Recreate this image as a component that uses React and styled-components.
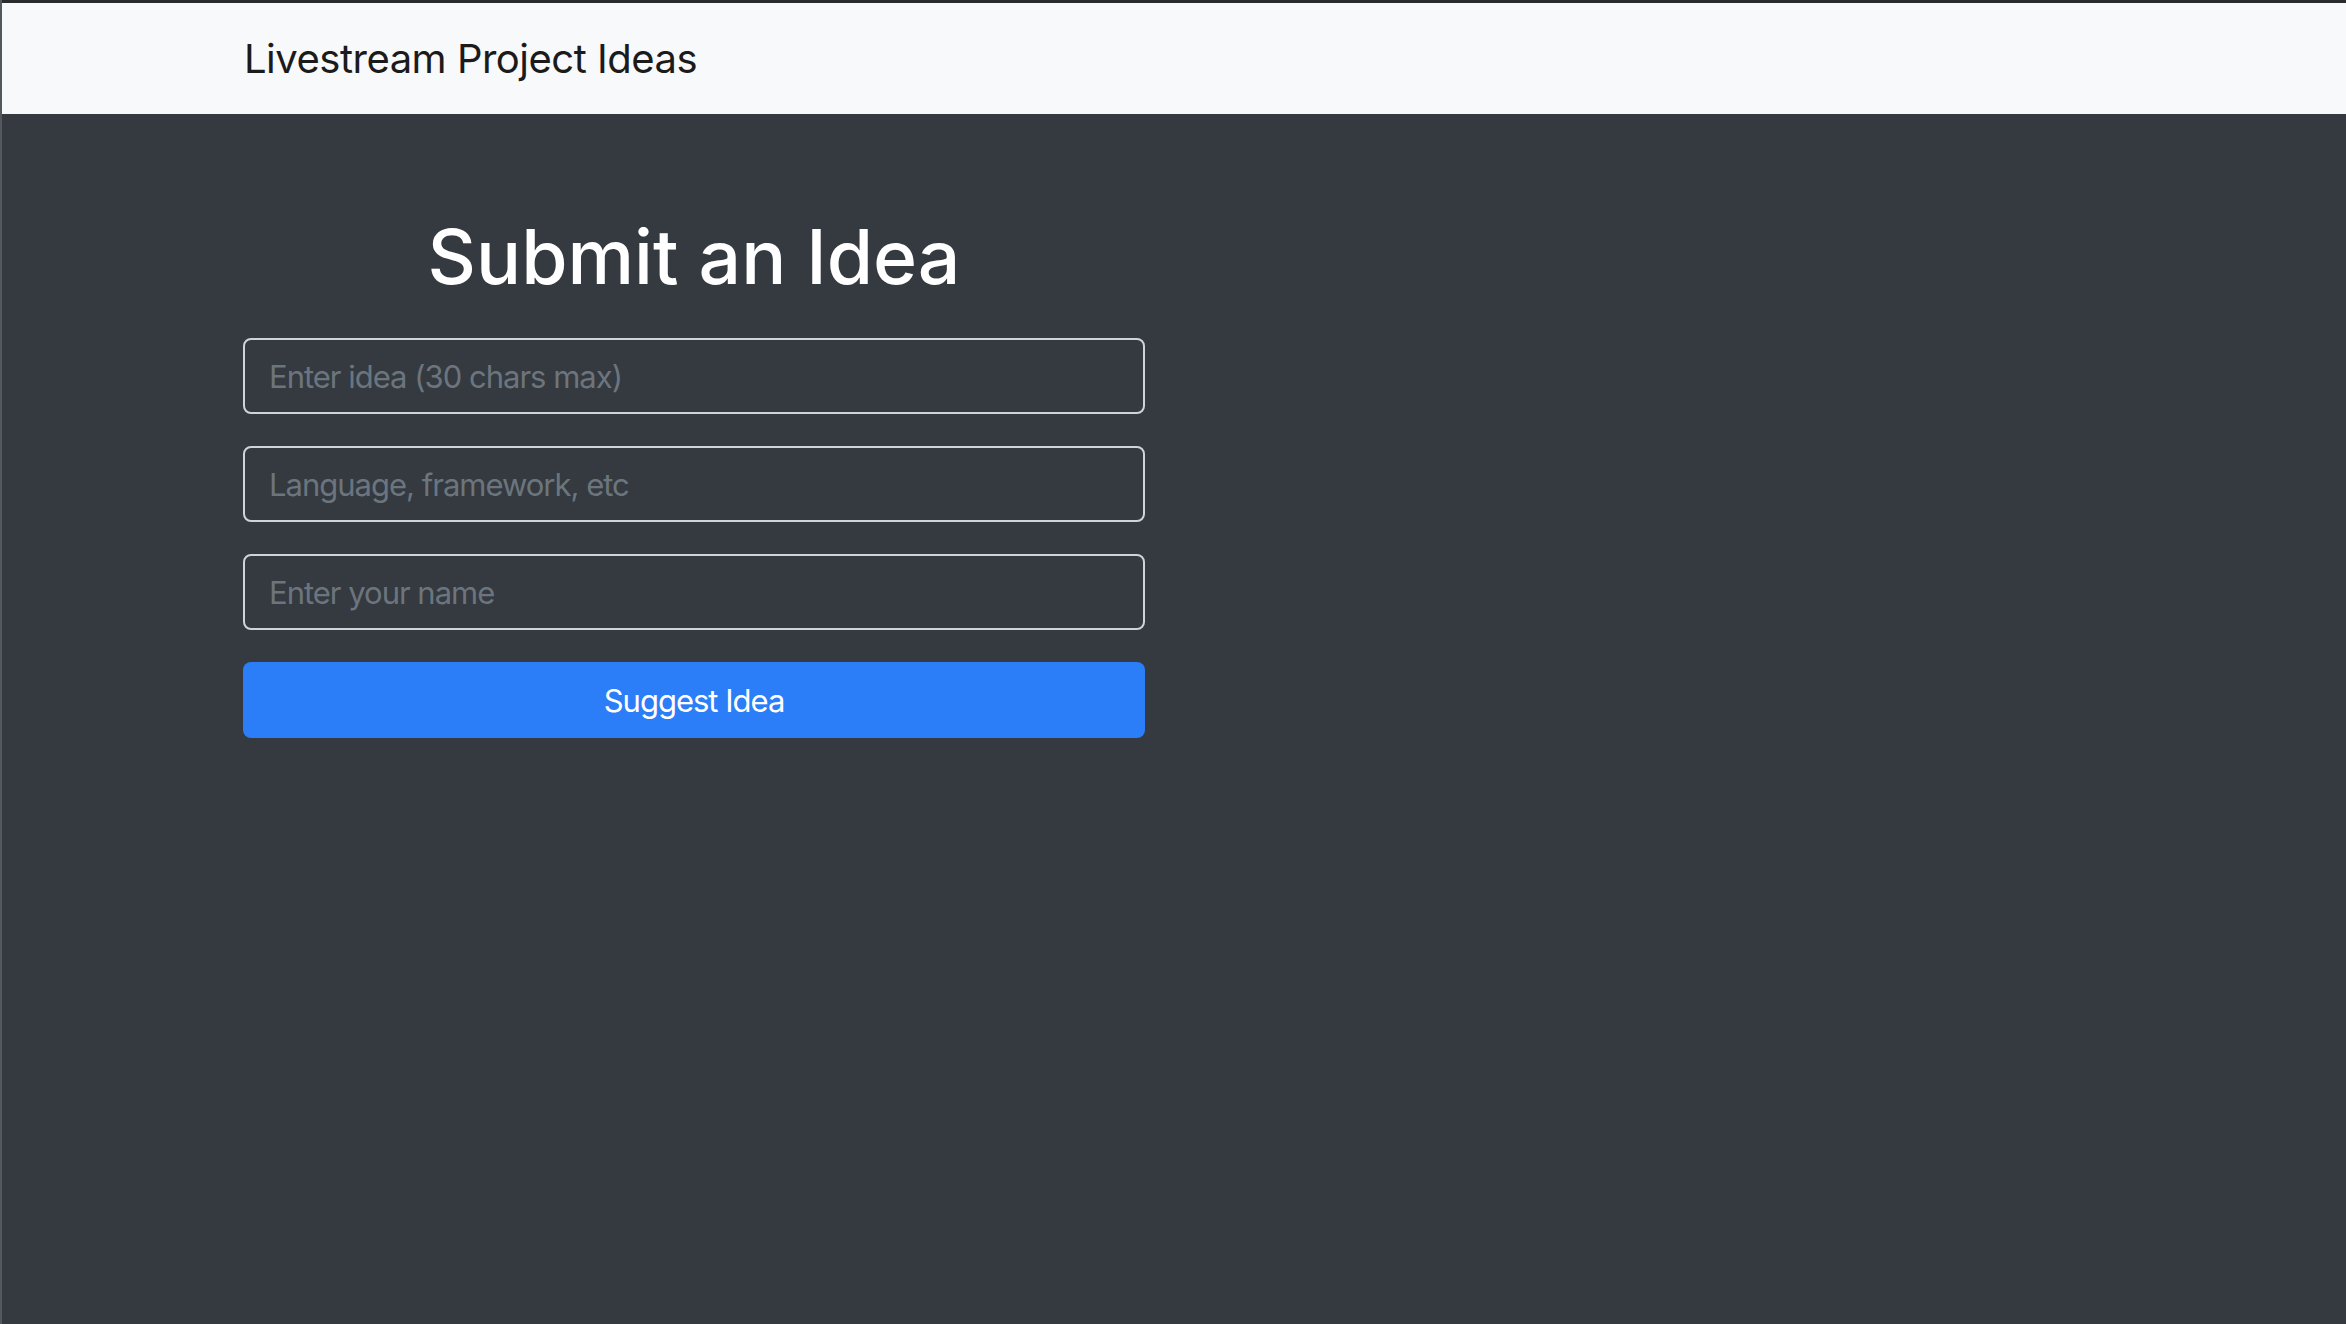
import React, { useState } from "react";
import styled, { createGlobalStyle } from "styled-components";

const GlobalStyle = createGlobalStyle`
  html, body {
    margin: 0;
    padding: 0;
    background-color: #343a40;
    font-family: Inter, "Liberation Sans", Arial, sans-serif;
  }
  * {
    box-sizing: border-box;
  }
`;

const App = () => {
  const initialState = {
    idea: "",
    tech: "",
    name: "",
  };

  const [formData, setFormData] = useState(initialState);

  const onChangeHandler = (e) => {
    setFormData({ ...formData, [e.target.name]: e.target.value });
  };
  const onSubmitHandler = (e) => {
    e.preventDefault();
  };

  return (
    <Page>
      <GlobalStyle />
      <Navbar>
        <Brand>Livestream Project Ideas</Brand>
      </Navbar>
      <Main>
        <Column onSubmit={onSubmitHandler}>
          <Title>Submit an Idea</Title>
          <Input
            type="text"
            name="idea"
            value={formData.idea}
            onChange={onChangeHandler}
            placeholder="Enter idea (30 chars max)"
          />
          <Input
            type="text"
            name="tech"
            value={formData.tech}
            onChange={onChangeHandler}
            placeholder="Language, framework, etc"
          />
          <Input
            type="text"
            name="name"
            value={formData.name}
            onChange={onChangeHandler}
            placeholder="Enter your name"
          />
          <SubmitButton type="submit">Suggest Idea</SubmitButton>
        </Column>
      </Main>
    </Page>
  );
};

const Page = styled.div`
  min-height: 1324px;
  display: flex;
  flex-direction: column;
  border-left: 2px solid #53585d;
  background-color: #343a40;
`;

const Navbar = styled.nav`
  height: 114px;
  display: flex;
  align-items: center;
  padding-left: 242px;
  background-color: #f8f9fa;
  border-top: 3px solid #2a2b2c;
`;

const Brand = styled.a`
  font-size: 40px;
  font-weight: 400;
  color: #1b1b1b;
  letter-spacing: -0.5px;
`;

const Main = styled.main`
  flex: 1;
  padding: 100px 0 0 241px;
`;

const Column = styled.form`
  width: 902px;
  display: flex;
  flex-direction: column;
  gap: 32px;
`;

const Title = styled.h1`
  margin: 0 0 6px;
  font-size: 75px;
  line-height: 86px;
  font-weight: 500;
  color: #ffffff;
  text-align: center;
  letter-spacing: 0;
`;

const Input = styled.input`
  height: 76px;
  width: 100%;
  padding: 0 24px;
  background-color: transparent;
  border: 2px solid #ced4da;
  border-radius: 8px;
  color: #ffffff;
  font-family: inherit;
  font-size: 31px;
  letter-spacing: -1px;
  outline: none;

  &::placeholder {
    color: #6c757d;
  }
`;

const SubmitButton = styled.button`
  height: 76px;
  width: 100%;
  border: none;
  border-radius: 8px;
  background-color: #2b7df8;
  color: #ffffff;
  font-family: inherit;
  font-size: 31px;
  letter-spacing: -1px;
  cursor: pointer;
`;

export default App;
